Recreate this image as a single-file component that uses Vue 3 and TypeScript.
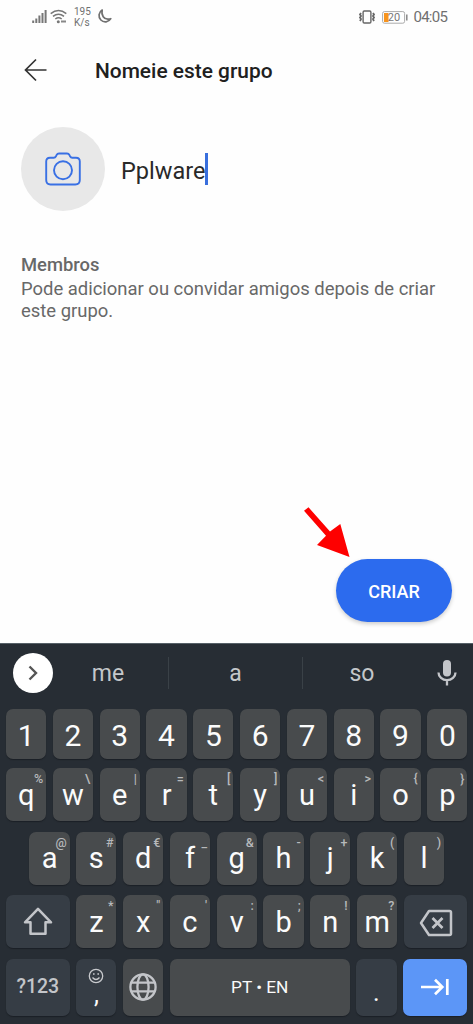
<script setup lang="ts">
interface Key {
  label: string
  hint?: string
}

const toKeys = (labels: string, hints: string[] = []): Key[] =>
  labels.split('').map((label, i) => ({ label, hint: hints[i] }))

const digits = toKeys('1234567890')
const top = toKeys('qwertyuiop', ['%', '\\', '|', '=', '[', ']', '<', '>', '{', '}'])
const home = toKeys('asdfghjkl', ['@', '#', '€', '_', '&', '-', '+', '(', ')'])
const bottom = toKeys('zxcvbnm', ['*', '"', "'", ':', ';', '!', '?'])
</script>

<template>
  <main class="screen">
    <header class="status">
      <div class="status-left">
        <svg class="signal" width="15" height="15" viewBox="0 0 15 15">
          <path d="M1.2 14v-2.5M4.3 14V9.5M7.4 14V6.5M10.5 14V4M13.6 14V1" stroke="#777" stroke-width="2" />
        </svg>
        <svg class="wifi" width="17" height="15" viewBox="0 0 17 15">
          <g fill="none" stroke="#777" stroke-width="1.5">
            <path d="M.7 4.6Q8.500-1.700 16.300 4.600" />
            <path d="M3 7.400Q8.500 2.900 14 7.400" />
            <path d="M5.300 10Q8.500 7.400 11.700 10" />
          </g>
          <circle cx="8.300" cy="12.700" r="1.500" fill="#777" />
          <path d="M11 12.500h5" stroke="#888" stroke-width="2" />
        </svg>
        <div class="speed"><span>195</span><span>K/s</span></div>
        <svg class="moon" width="15" height="15" viewBox="0 0 15 15">
          <path d="M5.200 1.100A6.300 6.300 0 1 0 13.800 9.700Q8.500 11.300 6.200 7.700Q4.300 4.800 5.200 1.100Z" fill="none" stroke="#707070" stroke-width="1.700" stroke-linejoin="round" />
        </svg>
      </div>
      <div class="status-right">
        <svg width="18" height="14" viewBox="0 0 18 14" fill="none" stroke="#666">
          <rect x="5.100" y="1" width="7.800" height="12" rx="1.200" stroke-width="1.400" />
          <path d="M3 3l-1 1.500 1 1.500-1 1.500 1 1.500-1 2M15 3l1 1.500-1 1.500 1 1.500-1 1.500 1 2" stroke-width="1.800" />
        </svg>
        <svg class="battery" width="26" height="13" viewBox="0 0 26 13">
          <rect x=".6" y=".6" width="22" height="11.600" rx="1.800" fill="#fff" stroke="#aaa" stroke-width="1" />
          <rect x="2" y="2" width="4.500" height="9" fill="#f7941d" />
          <path d="M24.800 3.500v6" stroke="#888" stroke-width="1.500" />
          <text x="12" y="10.200" text-anchor="middle" font-size="11" fill="#777">20</text>
        </svg>
        <span class="clock">04:05</span>
      </div>
    </header>

    <div class="titlebar">
      <svg width="24" height="24" viewBox="0 0 24 24" fill="none" stroke="#333" stroke-width="1.700">
        <path d="M22.500 12H1.500M12 1.500L1.500 12l10.500 10.500" />
      </svg>
      <h1>Nomeie este grupo</h1>
    </div>

    <section class="group">
      <div class="avatar">
        <svg width="36" height="34" viewBox="0 0 36 34" fill="none" stroke="#3970e4" stroke-width="1.900">
          <path d="M5 5.700h3.700q1.500 0 2.300-1.500l.5-1.100Q12.300 1.500 14 1.500h8q1.700 0 2.500 1.600l.5 1.100q.8 1.500 2.300 1.500H31q3.800 0 3.800 3.800V28q0 4.500-4.500 4.500H5.500Q1.200 32.500 1.200 28V9.500Q1.200 5.700 5 5.700Z" />
          <circle cx="18" cy="18.300" r="9" />
        </svg>
      </div>
      <div class="name"><span>Pplware</span><i class="caret"></i></div>
    </section>

    <section class="members">
      <h2>Membros</h2>
      <p>Pode adicionar ou convidar amigos depois de criar<br />este grupo.</p>
    </section>

    <div class="action">
      <button class="create">CRIAR</button>
      <svg class="pointer" width="48" height="52" viewBox="0 0 48 52">
        <path d="M4.500 .3L26 24.500 36.300 17 45.500 50 13 38 22 28.700 0 3.800Z" fill="#fe0000" />
      </svg>
    </div>

    <section class="keyboard">
      <div class="suggestions">
        <div class="expand">
          <svg width="10" height="16" viewBox="0 0 10 16"><path d="M1.500 1.500L8 8l-6.500 6.500" fill="none" stroke="#555" stroke-width="2.400" /></svg>
        </div>
        <span class="word first">me</span>
        <span class="word">a</span>
        <span class="word last">so</span>
        <svg class="mic" width="20" height="26" viewBox="0 0 20 26">
          <rect x="6" y="0" width="8" height="16.500" rx="4" fill="#c3c5c9" />
          <path d="M1.500 12.500a8.500 7.700 0 0 0 17 0M10 20v5.500" fill="none" stroke="#c3c5c9" stroke-width="2.300" />
        </svg>
      </div>

      <div class="row digits">
        <div v-for="key in digits" :key="key.label" class="key">{{ key.label }}</div>
      </div>
      <div class="row">
        <div v-for="key in top" :key="key.label" class="key"><span>{{ key.label }}</span><small>{{ key.hint }}</small></div>
      </div>
      <div class="row home">
        <div v-for="key in home" :key="key.label" class="key"><span>{{ key.label }}</span><small>{{ key.hint }}</small></div>
      </div>
      <div class="row">
        <div class="key dark wide">
          <svg width="30" height="29" viewBox="0 0 30 29"><path d="M15 1.800L28 15.300h-5.500v11.500h-15V15.300H2Z" fill="none" stroke="#c3c5c9" stroke-width="2.500" stroke-linejoin="round" /></svg>
        </div>
        <div v-for="key in bottom" :key="key.label" class="key"><span>{{ key.label }}</span><small>{{ key.hint }}</small></div>
        <div class="key dark wide">
          <svg class="erase" width="34" height="28" viewBox="0 0 34 28" fill="none" stroke="#c3c5c9" stroke-width="2.500">
            <path d="M10 2h20.500q1.500 0 1.500 1.500v21q0 1.500-1.500 1.500H10L2 14Z" stroke-linejoin="round" />
            <path d="M13.500 9l10 10M23.500 9l-10 10" stroke-width="2.700" />
          </svg>
        </div>
      </div>
      <div class="row functions">
        <div class="key dark wide symbols">?123</div>
        <div class="key dark comma">
          <svg width="16" height="16" viewBox="0 0 16 16" fill="none" stroke="#c8cacd" stroke-width="1.300">
            <circle cx="8" cy="8" r="6.700" />
            <path d="M4.500 9.500q3.500 4 7 0" />
            <path d="M5 6h1.600M9.400 6H11" stroke-width="1.600" />
          </svg>
          <span>,</span>
        </div>
        <div class="key globe">
          <svg width="28" height="28" viewBox="0 0 28 28" fill="none" stroke="#c3c5c9" stroke-width="2.300">
            <circle cx="14" cy="14" r="12.600" />
            <ellipse cx="14" cy="14" rx="5.600" ry="12.600" />
            <path d="M2.500 9.700h23M2.500 18.300h23" />
          </svg>
        </div>
        <div class="key space">PT • EN</div>
        <div class="key dark period">.</div>
        <div class="key enter">
          <svg width="30" height="18" viewBox="0 0 30 18" fill="none" stroke="#fff" stroke-width="2.700"><path d="M1 9h21M15 1.800L22.300 9 15 16.200M27.300 1v16" /></svg>
        </div>
      </div>
    </section>
  </main>
</template>

<style>
body { margin: 0; background: #fefefe; }
</style>

<style scoped>
* { box-sizing: border-box; }
.screen { width: 473px; height: 1024px; display: flex; flex-direction: column; overflow: hidden; background: #fefefe; font-family: Roboto, "Liberation Sans", sans-serif; }
svg { display: block; flex: none; }
.status { height: 34px; display: flex; justify-content: space-between; padding: 0 25px 0 32px; color: #707070; }
.status-left, .status-right { display: flex; align-items: center; }
.signal { margin-top: -2px; }
.wifi { margin: -2px 7px 0 3px; }
.speed { display: flex; flex-direction: column; width: 17px; font-size: 10px; line-height: 11px; }
.moon { margin: -2px 0 0 6px; }
.battery { margin: 0 5px 0 6px; }
.clock { font-size: 15.500px; line-height: 18px; letter-spacing: -1px; transform: scaleX(.97); }
.clock { letter-spacing: -.8px; }
.titlebar { height: 71px; display: flex; align-items: center; padding-left: 24px; gap: 47px; }
h1 { margin: 2px 0 0; font-size: 20.900px; line-height: 26px; font-weight: 500; color: #202020; }
.group { height: 84px; margin: 22px 21px 0; display: flex; align-items: center; gap: 16px; }
.avatar { width: 84px; height: 84px; display: grid; place-items: center; border-radius: 50%; background: #e8e8e8; }
.name { display: flex; align-items: center; font-size: 23.500px; color: #292929; }
.name span { padding-top: 4px; }
.caret { width: 2.500px; height: 32px; background: #396fdd; }
.members { margin: 42px 21px 0; color: #686868; }
h2 { margin: 0; font-size: 18.400px; line-height: 23px; font-weight: 500; }
p { margin: 2px 0 0; font-size: 18.450px; line-height: 22px; white-space: nowrap; }
.action { position: relative; width: 116px; height: 63px; margin: auto 21px 21px auto; }
.create { width: 116px; height: 63px; padding: 2px 0 0; border: 0; border-radius: 32px; background: #2c6bee; color: #fff; font: 500 18px Roboto, sans-serif; box-shadow: 0 2px 4px #0003; }
.pointer { position: absolute; left: -32px; top: -52px; }
.keyboard { flex: none; width: 473px; height: 381px; display: flex; flex-direction: column; padding: 0 6px; background: #272d34; border-top: 1px solid #566067; }
.suggestions { height: 65px; display: flex; align-items: center; padding: 0 10px 8px 7px; }
.expand { width: 40px; height: 40px; display: grid; place-items: center; border-radius: 50%; background: #fff; }
.word { width: 134px; height: 32px; text-align: center; font-size: 23px; line-height: 34px; color: #c4c7ca; border-right: 1px solid #3a4147; }
.word.first { width: 116px; padding-right: 5px; }
.word.last { width: 134px; border-right: 0; padding-right: 16px; }
.mic { margin-left: auto; }
.row { display: flex; gap: 6.500px; height: 53px; margin-bottom: 10.500px; flex: none; }
.row.digits { height: 50px; margin-bottom: 9px; }
.row.home { padding: 0 23.400px; }
.row.functions { height: 57px; margin: 0; }
.key { position: relative; flex: 0 0 40.300px; display: grid; place-items: center; border-radius: 7px; background: #484b4d; color: #fbfbfb; font-size: 29px; line-height: 34px; box-shadow: 0 1px 1px #1b2026; }
.digits .key { font-size: 30px; padding-top: 3px; }
.key small { position: absolute; top: 3px; right: 3px; font-size: 12.500px; line-height: 15px; font-weight: 500; color: #b7b9bb; }
.key.dark { background: #363d45; }
.key.wide { flex-basis: 63.700px; }
.erase { margin-top: 2px; }
.key.symbols { font-size: 19.500px; font-weight: 500; color: #c3c5c9; }
.key.comma { display: flex; flex-direction: column; justify-content: flex-start; padding-top: 9px; font-size: 25px; line-height: 21px; }
.key.space { flex: 1; font-size: 17.300px; }
.key.period { font-size: 25px; padding-top: 11px; }
.key.enter { flex-basis: 64px; background: #5c96f7; }
</style>
